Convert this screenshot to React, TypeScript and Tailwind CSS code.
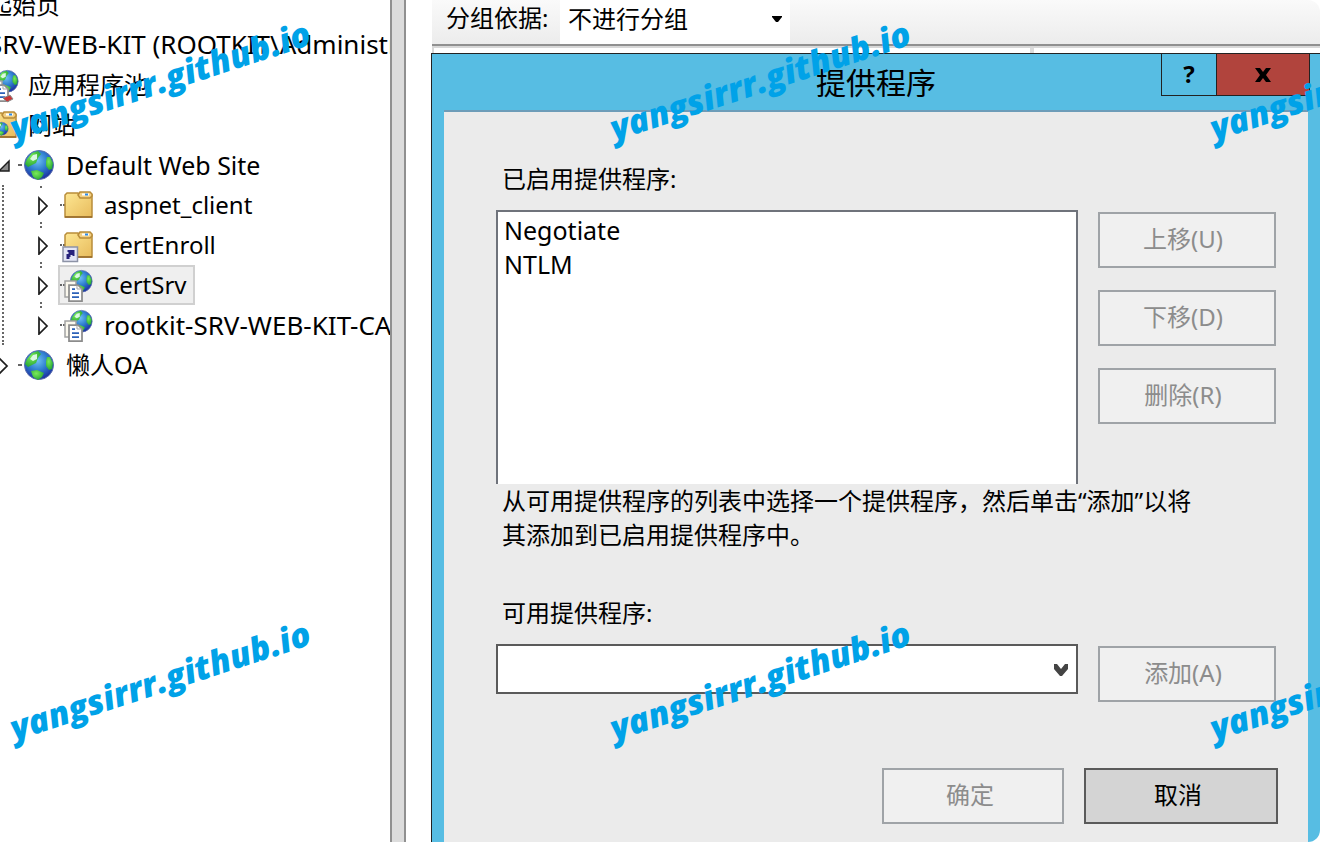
import React from "react";

const tile = [
  { left: "left-0", top: "top-0" },
  { left: "left-[600px]", top: "top-0" },
  { left: "left-[1200px]", top: "top-0" },
  { left: "left-0", top: "top-[600px]" },
  { left: "left-[600px]", top: "top-[600px]" },
  { left: "left-[1200px]", top: "top-[600px]" },
];

function Watermarks() {
  return (
    <div aria-hidden="true" className="pointer-events-none absolute inset-0 overflow-hidden">
      {tile.map((t) => (
        <div key={t.left + t.top} className={`absolute ${t.left} ${t.top} flex h-[160px] w-80 items-center justify-center`}>
          <span className="-rotate-[18deg] font-['Open_Sans','Noto_Sans',sans-serif] text-[34px] leading-10 font-extrabold whitespace-nowrap text-[#00a2e8] italic">
            yangsirrr.github.io
          </span>
        </div>
      ))}
    </div>
  );
}

function Defs() {
  return (
    <svg className="absolute size-0" aria-hidden="true">
      <defs>
        <radialGradient id="sea" cx="0.45" cy="0.35" r="0.65">
          <stop offset="0" stopColor="#6fc0f2" />
          <stop offset="0.5" stopColor="#2f7fd0" />
          <stop offset="1" stopColor="#1b2fa0" />
        </radialGradient>
        <radialGradient id="land" cx="0.4" cy="0.35" r="0.8">
          <stop offset="0" stopColor="#7bea5a" />
          <stop offset="1" stopColor="#159a2c" />
        </radialGradient>
        <linearGradient id="folder" x1="0" y1="0" x2="1" y2="1">
          <stop offset="0" stopColor="#fde793" />
          <stop offset="1" stopColor="#e8bb5c" />
        </linearGradient>
      </defs>
    </svg>
  );
}

function GlobeShape() {
  return (
    <g>
      <circle cx="15" cy="15" r="14.5" fill="url(#sea)" stroke="#5c6fae" strokeWidth="1" />
      <path d="M3 9 L8 3 L14 1 L17 4 L14 8 L12 13 L8 15 L4 17 L1 14 Z" fill="url(#land)" />
      <path d="M9 5 L13 4 L13 9 L9 11 L6 9 Z" fill="#dcf8e4" />
      <path d="M23 7 L26 7 L29 13 L28 19 L25 20 L22 16 L22 11 Z" fill="url(#land)" />
      <path d="M7 21 L13 20 L20 23 L18 27 L14 30 L9 27 Z" fill="url(#land)" />
    </g>
  );
}

function Globe() {
  return (
    <svg className="size-8 shrink-0" viewBox="-2 -1 32 32" aria-hidden="true">
      <GlobeShape />
    </svg>
  );
}

function FolderShape() {
  return (
    <g>
      <path d="M3 6 L5 4 H16 L17 6 H30 V28 H3 Z" fill="url(#folder)" stroke="#b98d3a" strokeWidth="1.5" />
      <path d="M16 6 L18 3 H28 L30 5 V7 L28 9 H18 Z" fill="#f3d083" stroke="#b98d3a" strokeWidth="1.5" />
      <rect x="20" y="4.5" width="7" height="2" fill="#fff" />
      <rect x="23" y="4.5" width="3" height="2" fill="#2f8be8" />
      <path d="M3 28 H30" stroke="#94692a" strokeWidth="1.5" />
    </g>
  );
}

function Folder({ link = false }: { link?: boolean }) {
  return (
    <svg className="size-8 shrink-0 overflow-visible" viewBox="0 0 32 32" aria-hidden="true">
      <FolderShape />
      {link && (
        <g>
          <rect x="1" y="18" width="14.5" height="14.5" fill="#e4e6f6" stroke="#8d93a6" strokeWidth="1.5" />
          <path d="M4.5 30 V25 H6.5 V23 H5.5 V21 H12.5 V27 H10.5 V26 H8.5 V28 H7.5 V30 Z" fill="#27227c" />
        </g>
      )}
    </svg>
  );
}

function AppIcon({ pool = false }: { pool?: boolean }) {
  return (
    <svg className="size-8 shrink-0 overflow-visible" viewBox="0 0 32 32" aria-hidden="true">
      <g transform="translate(8 1) scale(0.75)">
        <GlobeShape />
      </g>
      <path d="M3 12 H14 V28 H3 Z" fill="#fbf8ee" stroke="#a3a3a3" strokeWidth="1.5" />
      <path d="M7 16 H16 L20 20 V32 H7 Z" fill="#fff" stroke="#8c8c8c" strokeWidth="1.75" />
      <path d="M15 16 V20 H20" fill="none" stroke="#a3a3a3" strokeWidth="1" />
      <path d="M10 20 H13 M10 24 H17 M10 28 H17" stroke="#2c62b8" strokeWidth="1.75" />
      {pool && <path d="M15 29 L22 26 L25 30 L19 33 Z" fill="#c93838" stroke="#8c8c8c" />}
    </svg>
  );
}

function SiteFolder() {
  return (
    <svg className="size-8 shrink-0 overflow-visible" viewBox="2 0 32 32" aria-hidden="true">
      <FolderShape />
      <g transform="translate(9 13) scale(0.45)">
        <GlobeShape />
      </g>
    </svg>
  );
}

function Expander({ open = false, name }: { open?: boolean; name: string }) {
  return (
    <button type="button" aria-label={name} className="flex size-5 shrink-0 items-center justify-center">
      <svg className="h-5 w-3" viewBox="0 0 12 20" aria-hidden="true">
        {open ? (
          <path d="M11 6 V16 H1 Z" fill="#8a8a8a" stroke="#1e1e1e" strokeWidth="1.5" />
        ) : (
          <path d="M1 3 L9 11 L1 19 Z" fill="#fff" stroke="#1e1e1e" strokeWidth="1.75" />
        )}
      </svg>
    </button>
  );
}

function Dots({ short = false }: { short?: boolean }) {
  return <span className={`${short ? "w-1" : "w-2"} shrink-0 border-t-2 border-dotted border-[#666]`} />;
}

type ChildProps = { name: string; icon: React.ReactNode; selected?: boolean; last?: boolean; text?: string };

function Child({ name, icon, selected = false, last = false, text = "text-2xl leading-10" }: ChildProps) {
  return (
    <li role="treeitem" aria-selected={selected} className="flex h-10 items-center">
      <span className="flex h-10 flex-col justify-between py-px">
        <span className="ml-[6px] size-[2px] bg-[#666]" />
        <Expander name={name} />
        <span className={`ml-[6px] size-[2px] ${last ? "bg-transparent" : "bg-[#666]"}`} />
      </span>
      <span className={`ml-1 flex h-10 items-center border-2 pr-[6px] ${selected ? "border-[#d0d0d0] bg-[#efefef]" : "border-transparent"}`}>
        <Dots />
        <span className="-ml-2 pl-[2px]">{icon}</span>
        <span className={`pl-[10px] whitespace-nowrap ${text}`}>{name}</span>
      </span>
    </li>
  );
}

function Tree() {
  return (
    <ul role="tree" aria-label="连接" className="-mt-[15px] -ml-3 leading-10">
      <li role="treeitem" className="h-10">起始页</li>
      <li role="treeitem" className="h-10 text-[26px] leading-[38px] whitespace-nowrap">SRV-WEB-KIT (ROOTKIT\Administrator)</li>
      <li role="treeitem" className="flex h-10 items-center gap-2">
        <AppIcon pool />
        应用程序池
      </li>
      <li role="treeitem" className="flex h-10 items-center gap-2">
        <SiteFolder />
        网站
      </li>
      <li role="treeitem" aria-expanded="true" className="pl-[6px]">
        <div className="flex h-10 items-center">
          <Expander open name="Default Web Site" />
          <span className="w-1" />
          <Dots short />
          <Globe />
          <span className="pl-3 text-[25px] leading-[38px]">Default Web Site</span>
        </div>
        <ul role="group" className="ml-2 border-l-2 border-dotted border-[#666] pl-[30px]">
          <Child name="aspnet_client" icon={<Folder />} />
          <Child name="CertEnroll" icon={<Folder link />} />
          <Child name="CertSrv" icon={<AppIcon />} selected />
          <Child name="rootkit-SRV-WEB-KIT-CA" icon={<AppIcon />} last text="text-[26px] leading-[38px]" />
        </ul>
      </li>
      <li role="treeitem" className="flex h-10 items-center pl-[6px]">
        <Expander name="懒人OA" />
        <span className="w-1" />
        <Dots short />
        <Globe />
        <span className="pl-3">懒人OA</span>
      </li>
    </ul>
  );
}

const sideButton = "h-14 w-full border-2 border-[#9fa3a7] bg-[#f0f0f0] pr-2 pb-[2px] text-[#8c8c8c]";

function Dialog() {
  return (
    <section
      role="dialog"
      aria-labelledby="dialog-title"
      className="absolute top-[53px] right-0 bottom-0 left-[25px] flex flex-col border-t border-l border-[#222] bg-[#57bde3] px-3"
    >
      <header className="relative flex h-14 shrink-0 items-center justify-center">
        <h1 id="dialog-title" className="pt-[2px] text-3xl">提供程序</h1>
        <div className="absolute top-0 -right-[2px] flex h-[42px] border border-t-0 border-[#222]">
          <button type="button" aria-label="帮助" className="w-[55px] border-r border-[#222] pb-[2px] text-2xl font-bold">?</button>
          <button type="button" aria-label="关闭" className="flex w-[92px] items-center justify-center bg-[#b1443d]">
            <svg className="h-4 w-4" viewBox="0 0 16 16" aria-hidden="true">
              <path d="M0 1 H5 L8 5 L11 1 H16 L11 8 L16 15 H11 L8 11 L5 15 H0 L5 8 Z" fill="#000" />
            </svg>
          </button>
        </div>
      </header>
      <div className="flex-1 border-t-2 border-[#6d9cb8] bg-[#ebebeb] pt-[50px] pr-8 pl-[52px]">
        <div className="grid grid-cols-[minmax(0,1fr)_178px] gap-x-5">
          <label htmlFor="enabled" className="pl-[6px] leading-[34px]">已启用提供程序:</label>
          <span />
          <select
            id="enabled"
            size={8}
            className="mt-[14px] h-[274px] appearance-none overflow-hidden border-2 border-b-0 border-[#6f737b] bg-white pt-px text-[25px] outline-none"
          >
            <option className="min-h-[34px] px-[6px] py-0 leading-[34px]">Negotiate</option>
            <option className="min-h-[34px] px-[6px] py-0 leading-[34px]">NTLM</option>
          </select>
          <div className="mt-4 flex flex-col gap-[22px]">
            <button type="button" disabled className={sideButton}>上移(U)</button>
            <button type="button" disabled className={sideButton}>下移(D)</button>
            <button type="button" disabled className={sideButton}>删除(R)</button>
          </div>
        </div>
        <p className="max-w-[706px] pl-[6px] leading-[34px]">
          从可用提供程序的列表中选择一个提供程序，然后单击“添加”以将其添加到已启用提供程序中。
        </p>
        <div className="mt-[44px] grid grid-cols-[minmax(0,1fr)_178px] gap-x-5">
          <label htmlFor="available" className="pl-[6px] leading-[34px]">可用提供程序:</label>
          <span />
          <div className="relative mt-[14px] h-[50px]">
            <select id="available" className="h-full w-full appearance-none border-2 border-[#5a5a5a] bg-white px-2 outline-none">
              <option></option>
            </select>
            <svg className="pointer-events-none absolute top-[20px] right-[10px] h-3 w-[14px]" viewBox="0 0 14 12" aria-hidden="true">
              <path d="M0 0 H3 L7 5 L11 0 H14 V5 L8 12 H6 L0 5 Z" fill="#444" />
            </svg>
          </div>
          <button type="button" disabled className={`${sideButton} mt-4`}>添加(A)</button>
        </div>
        <div className="mt-[66px] -mr-[2px] flex justify-end gap-5">
          <button type="button" disabled className="h-14 w-[182px] border-2 border-[#9fa3a7] bg-[#f0f0f0] pr-[6px] pb-[2px] text-[#8c8c8c]">确定</button>
          <button type="button" className="h-14 w-[194px] border-2 border-[#5a5a5a] bg-[#d4d4d4] pr-[6px] pb-[2px]">取消</button>
        </div>
      </div>
    </section>
  );
}

export default function App() {
  return (
    <div className="relative flex h-screen overflow-hidden rounded-xl bg-white font-['Noto_Sans','Noto_Sans_CJK_SC',sans-serif] text-2xl text-black">
      <Defs />
      <aside className="w-[390px] shrink-0 overflow-hidden">
        <Tree />
      </aside>
      <div className="w-4 shrink-0 border-x-2 border-[#909090] bg-[#dcdcdc]" />
      <main className="relative min-w-0 flex-1 pl-[26px]">
        <div className="flex h-[46px] items-start border-b-2 border-[#909090] bg-gradient-to-b from-[#fafafa] to-[#ececec] pl-[14px]">
          <label htmlFor="group" className="w-[114px] leading-9 whitespace-nowrap">分组依据:</label>
          <div className="relative h-11 w-[230px]">
            <select id="group" className="h-full w-full appearance-none bg-white pb-[6px] pl-2 outline-none">
              <option>不进行分组</option>
            </select>
            <svg className="pointer-events-none absolute top-[16px] right-2 h-[6px] w-[10px]" viewBox="0 0 10 6" aria-hidden="true">
              <path d="M0 0 H10 V1 L6 6 H4 L0 1 Z" fill="#000" />
            </svg>
          </div>
        </div>
        <div className="flex h-4 border-t-2 border-l-2 border-[#d8d8d8]">
          <span className="w-[600px] border-r-4 border-[#dcdcdc]" />
        </div>
        <Dialog />
      </main>
      <Watermarks />
    </div>
  );
}
